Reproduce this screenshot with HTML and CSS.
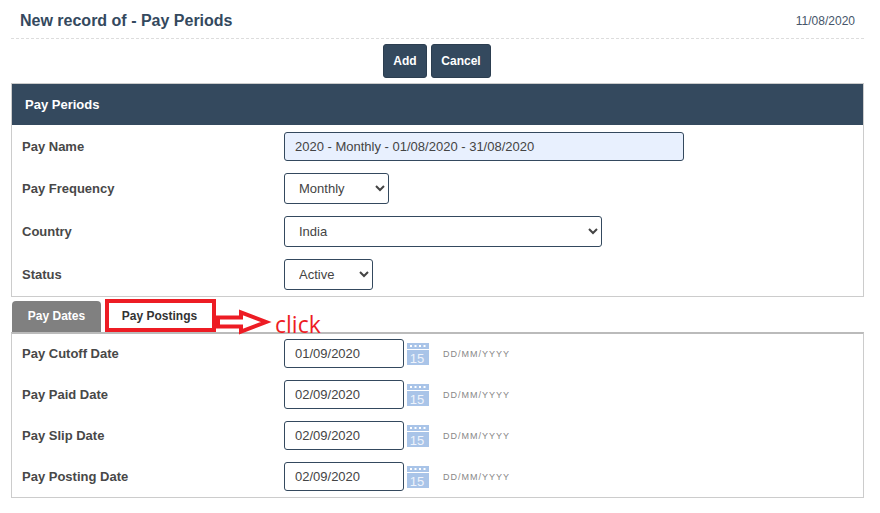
FILE: index.html
```html
<!DOCTYPE html>
<html lang="en">
<head>
  <meta charset="UTF-8" />
  <title>New record of - Pay Periods</title>
  <link rel="stylesheet" href="styles.css">
</head>
<body>
  <div class="page">
    <div class="page-head">
      <div class="page-title">New record of - Pay Periods</div>
      <div class="page-date">11/08/2020</div>
    </div>

    <div class="actions">
      <button class="btn btn-add">Add</button>
      <button class="btn btn-cancel">Cancel</button>
    </div>

    <div class="panel">
      <div class="panel-title">Pay Periods</div>
      <div class="panel-body">
        <div class="row row-name">
          <label class="row-label">Pay Name</label>
          <input class="field field-name" type="text" value="2020 - Monthly - 01/08/2020 - 31/08/2020">
        </div>
        <div class="row">
          <label class="row-label">Pay Frequency</label>
          <select class="field select-frequency"><option>Monthly</option></select>
        </div>
        <div class="row">
          <label class="row-label">Country</label>
          <select class="field select-country"><option>India</option></select>
        </div>
        <div class="row">
          <label class="row-label">Status</label>
          <select class="field select-status"><option>Active</option></select>
        </div>
      </div>
    </div>

    <div class="tabs">
      <div class="tab tab-active">Pay Dates</div>
      <div class="tab tab-marked">Pay Postings</div>

      <div class="note">
        <svg class="note-arrow" width="56" height="26" viewBox="0 0 56 26">
          <path d="M2 8.500H25V3.500L50 13L25 22.500V17.500H2Z" fill="#fff" stroke="#ed1c24" stroke-width="4"/>
        </svg>
        <span class="note-text">click</span>
      </div>
    </div>

    <div class="dates">
      <div class="date-row">
        <label class="row-label">Pay Cutoff Date</label>
        <input class="field field-date" type="text" value="01/09/2020">
        <svg class="cal" width="22" height="22" viewBox="0 0 22 22">
          <rect width="22" height="6" fill="#a9c4e8"/>
          <path d="M3 3h2M7.5 3h2M12 3h2M16.5 3h2" stroke="#fff" stroke-width="2"/>
          <rect y="7" width="22" height="15" fill="#a9c4e8"/>
          <text x="10" y="20" class="cal-num">15</text>
        </svg>
        <span class="date-hint">DD/MM/YYYY</span>
      </div>
      <div class="date-row">
        <label class="row-label">Pay Paid Date</label>
        <input class="field field-date" type="text" value="02/09/2020">
        <svg class="cal" width="22" height="22" viewBox="0 0 22 22">
          <rect width="22" height="6" fill="#a9c4e8"/>
          <path d="M3 3h2M7.5 3h2M12 3h2M16.5 3h2" stroke="#fff" stroke-width="2"/>
          <rect y="7" width="22" height="15" fill="#a9c4e8"/>
          <text x="10" y="20" class="cal-num">15</text>
        </svg>
        <span class="date-hint">DD/MM/YYYY</span>
      </div>
      <div class="date-row">
        <label class="row-label">Pay Slip Date</label>
        <input class="field field-date" type="text" value="02/09/2020">
        <svg class="cal" width="22" height="22" viewBox="0 0 22 22">
          <rect width="22" height="6" fill="#a9c4e8"/>
          <path d="M3 3h2M7.5 3h2M12 3h2M16.5 3h2" stroke="#fff" stroke-width="2"/>
          <rect y="7" width="22" height="15" fill="#a9c4e8"/>
          <text x="10" y="20" class="cal-num">15</text>
        </svg>
        <span class="date-hint">DD/MM/YYYY</span>
      </div>
      <div class="date-row">
        <label class="row-label">Pay Posting Date</label>
        <input class="field field-date" type="text" value="02/09/2020">
        <svg class="cal" width="22" height="22" viewBox="0 0 22 22">
          <rect width="22" height="6" fill="#a9c4e8"/>
          <path d="M3 3h2M7.5 3h2M12 3h2M16.5 3h2" stroke="#fff" stroke-width="2"/>
          <rect y="7" width="22" height="15" fill="#a9c4e8"/>
          <text x="10" y="20" class="cal-num">15</text>
        </svg>
        <span class="date-hint">DD/MM/YYYY</span>
      </div>
    </div>
  </div>
</body>
</html>
```

FILE: styles.css
```css
body {
  margin: 0;
  background: #fff;
  font-family: "Liberation Sans", Arial, sans-serif;
  color: #333;
}

.page {
  width: 853px;
  margin-left: 11px;
}

.page-head {
  height: 38px;
  display: flex;
  justify-content: space-between;
  align-items: center;
  padding: 0 9px;
  border-bottom: 1px dashed #ddd;
  color: #34495e;
}

.page-title {
  font-size: 16px;
  font-weight: bold;
  margin-top: 3px;
}

.page-date {
  font-size: 12px;
  margin-top: 3px;
  color: #46566a;
}

.actions {
  display: flex;
  justify-content: center;
  gap: 4px;
  margin-top: 5px;
  margin-bottom: 5px;
  padding-right: 1px;
}

.btn {
  height: 34px;
  padding: 0;
  border: 1px solid #2c3e50;
  border-radius: 3px;
  background: #34495e;
  color: #fff;
  font-family: inherit;
  font-size: 12px;
  font-weight: bold;
}

.btn-add { width: 44px; }
.btn-cancel { width: 60px; }

.panel {
  border: 1px solid #ccc;
  height: 214px;
  box-sizing: border-box;
}

.panel-title {
  height: 41px;
  line-height: 41px;
  padding-left: 13px;
  background: #34495e;
  color: #fff;
  font-size: 13px;
  font-weight: bold;
}

.panel-body {
  padding-top: 7px;
}

.row {
  display: flex;
  align-items: center;
  height: 31px;
  margin-bottom: 12px;
}

.row-name {
  height: 29px;
}

.row-label {
  width: 272px;
  padding-left: 10px;
  box-sizing: border-box;
  font-size: 13px;
  font-weight: bold;
  color: #484848;
}

.field {
  box-sizing: border-box;
  height: 31px;
  border: 1px solid #34495e;
  border-radius: 3px;
  background: #fff;
  color: #444;
  font-family: inherit;
  font-size: 13px;
  padding: 0 0 0 10px;
}

.field-name {
  width: 400px;
  height: 29px;
  background: #e8f0fe;
}

.select-frequency { width: 105px; }
.select-country { width: 318px; }
.select-status { width: 89px; }

.tabs {
  position: relative;
  display: flex;
  align-items: flex-end;
  height: 35px;
  padding-left: 1px;
  gap: 4px;
}

.tab {
  font-size: 12px;
  font-weight: bold;
  text-align: center;
}

.tab-active {
  width: 89px;
  height: 31px;
  line-height: 30px;
  background: #808080;
  color: #fff;
  border-radius: 4px 4px 0 0;
}

.tab-marked {
  width: 111px;
  height: 33px;
  line-height: 26px;
  padding-right: 2px;
  box-sizing: border-box;
  border: 4px solid #ed1c24;
  background: #fff;
  color: #333;
}

.note {
  position: absolute;
  left: 205px;
  top: 12px;
  display: flex;
  align-items: flex-start;
  z-index: 2;
}

.note-text {
  margin-left: 3px;
  font-family: "Open Sans", sans-serif;
  font-size: 23px;
  line-height: 30px;
  color: #ed1c24;
}

.dates {
  border: 1px solid #ccc;
  border-top: 2px solid #bbb;
  height: 166px;
  box-sizing: border-box;
  padding-top: 5px;
}

.date-row {
  display: flex;
  align-items: center;
  height: 29px;
  margin-bottom: 12px;
}

.field-date {
  width: 120px;
  height: 29px;
}

.cal {
  margin-left: 3px;
}

.cal-num {
  font-family: "Liberation Sans", Arial, sans-serif;
  font-size: 13px;
  fill: #eef3fb;
  text-anchor: middle;
}

.date-hint {
  margin-left: 14px;
  font-size: 9px;
  letter-spacing: 1px;
  color: #888;
}
```
